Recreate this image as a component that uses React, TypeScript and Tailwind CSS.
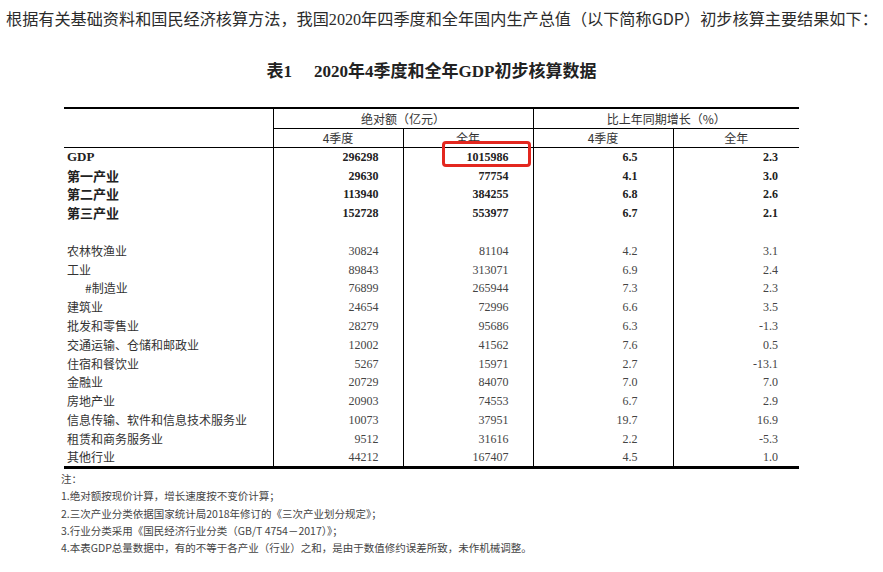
import React from "react";

type Row = {
  label: string;
  q4: string;
  year: string;
  gq4: string;
  gyear: string;
  bold?: boolean;
  indent?: boolean;
  blank?: boolean;
};

const rows: Row[] = [
  { label: "GDP", q4: "296298", year: "1015986", gq4: "6.5", gyear: "2.3", bold: true },
  { label: "第一产业", q4: "29630", year: "77754", gq4: "4.1", gyear: "3.0", bold: true },
  { label: "第二产业", q4: "113940", year: "384255", gq4: "6.8", gyear: "2.6", bold: true },
  { label: "第三产业", q4: "152728", year: "553977", gq4: "6.7", gyear: "2.1", bold: true },
  { label: "", q4: "", year: "", gq4: "", gyear: "", blank: true },
  { label: "农林牧渔业", q4: "30824", year: "81104", gq4: "4.2", gyear: "3.1" },
  { label: "工业", q4: "89843", year: "313071", gq4: "6.9", gyear: "2.4" },
  { label: "#制造业", q4: "76899", year: "265944", gq4: "7.3", gyear: "2.3", indent: true },
  { label: "建筑业", q4: "24654", year: "72996", gq4: "6.6", gyear: "3.5" },
  { label: "批发和零售业", q4: "28279", year: "95686", gq4: "6.3", gyear: "-1.3" },
  { label: "交通运输、仓储和邮政业", q4: "12002", year: "41562", gq4: "7.6", gyear: "0.5" },
  { label: "住宿和餐饮业", q4: "5267", year: "15971", gq4: "2.7", gyear: "-13.1" },
  { label: "金融业", q4: "20729", year: "84070", gq4: "7.0", gyear: "7.0" },
  { label: "房地产业", q4: "20903", year: "74553", gq4: "6.7", gyear: "2.9" },
  { label: "信息传输、软件和信息技术服务业", q4: "10073", year: "37951", gq4: "19.7", gyear: "16.9" },
  { label: "租赁和商务服务业", q4: "9512", year: "31616", gq4: "2.2", gyear: "-5.3" },
  { label: "其他行业", q4: "44212", year: "167407", gq4: "4.5", gyear: "1.0" },
];

const notes = [
  "注：",
  "1.绝对额按现价计算，增长速度按不变价计算；",
  "2.三次产业分类依据国家统计局2018年修订的《三次产业划分规定》；",
  "3.行业分类采用《国民经济行业分类（GB/T 4754－2017）》；",
  "4.本表GDP总量数据中，有的不等于各产业（行业）之和，是由于数值修约误差所致，未作机械调整。",
];

const sans = "font-['Noto_Sans_CJK_SC',sans-serif]";
const serif = "font-['Liberation_Serif','Noto_Sans_CJK_SC',serif]";

export default function App() {
  return (
    <div className="w-[883px] h-[572px] bg-white overflow-hidden text-[#333]">
      <p className={`${sans} text-[16.15px] leading-[24px] pt-[6px] pl-[6px] whitespace-nowrap text-[#2b2b2b]`}>
        根据有关基础资料和国民经济核算方法，我国<span className={serif}>2020</span>年四季度和全年国内生产总值（以下简称GDP）初步核算主要结果如下：
      </p>

      <h1 className={`${serif} font-bold text-[17px] leading-[24px] mt-[28px] w-[735px] ml-[64px] text-center text-[#222]`}>
        表1<span className="inline-block w-[22px]" />2020年4季度和全年GDP初步核算数据
      </h1>

      <table className="ml-[64px] mt-[23px] w-[735px] table-fixed border-collapse border-t-2 border-b-[3px] border-black">
        <colgroup>
          <col className="w-[209px]" />
          <col className="w-[130px]" />
          <col className="w-[130px]" />
          <col className="w-[140px]" />
          <col className="w-[126px]" />
        </colgroup>
        <thead className={`${sans} text-[12px] text-[#333] font-normal`}>
          <tr className="h-[20px]">
            <th rowSpan={2} className="border-b border-black" />
            <th colSpan={2} className="border-l border-b border-black font-normal leading-[19px]">
              绝对额（亿元）
            </th>
            <th colSpan={2} className="border-l border-b border-black font-normal leading-[19px]">
              比上年同期增长（%）
            </th>
          </tr>
          <tr className="h-[19px]">
            <th className="border-l border-b border-black font-normal leading-[18px]">4季度</th>
            <th className="border-l border-b border-black font-normal leading-[18px]">全年</th>
            <th className="border-l border-b border-black font-normal leading-[18px]">4季度</th>
            <th className="border-l border-b border-black font-normal leading-[18px]">全年</th>
          </tr>
        </thead>
        <tbody>
          {rows.map((r, i) => (
            <tr key={i} className="h-[18.8px]">
              <td
                className={`p-0 leading-[18px] whitespace-nowrap ${
                  r.bold
                    ? `${r.label === "GDP" ? serif : sans} font-bold text-[13px] text-[#222] pl-[3px]`
                    : `${sans} text-[12px] text-[#333] ${r.indent ? "pl-[21px]" : "pl-[3px]"}`
                }`}
              >
                {r.label}
              </td>
              <td className={`border-l border-black p-0 pr-[24px] text-right ${serif} text-[12px] leading-[18px] ${r.bold ? "font-bold text-[#222]" : "text-[#444]"}`}>
                {r.q4}
              </td>
              <td className={`relative border-l border-black p-0 pr-[24px] text-right ${serif} text-[12px] leading-[18px] ${r.bold ? "font-bold text-[#222]" : "text-[#444]"}`}>
                {r.year}
                {i === 0 && (
                  <span className="absolute left-[38px] right-[2px] top-[-7px] h-[26px] rounded-[4px] border-[3px] border-[#e3271f]" />
                )}
              </td>
              <td className={`border-l border-black p-0 pr-[35px] text-right ${serif} text-[12px] leading-[18px] ${r.bold ? "font-bold text-[#222]" : "text-[#444]"}`}>
                {r.gq4}
              </td>
              <td className={`border-l border-black p-0 pr-[21px] text-right ${serif} text-[12px] leading-[18px] ${r.bold ? "font-bold text-[#222]" : "text-[#444]"}`}>
                {r.gyear}
              </td>
            </tr>
          ))}
        </tbody>
      </table>

      <div className={`${sans} ml-[61px] mt-[1px] text-[10.5px] leading-[17.2px] text-[#444]`}>
        {notes.map((n, i) => (
          <p key={i} className="whitespace-nowrap">
            {n}
          </p>
        ))}
      </div>
    </div>
  );
}
